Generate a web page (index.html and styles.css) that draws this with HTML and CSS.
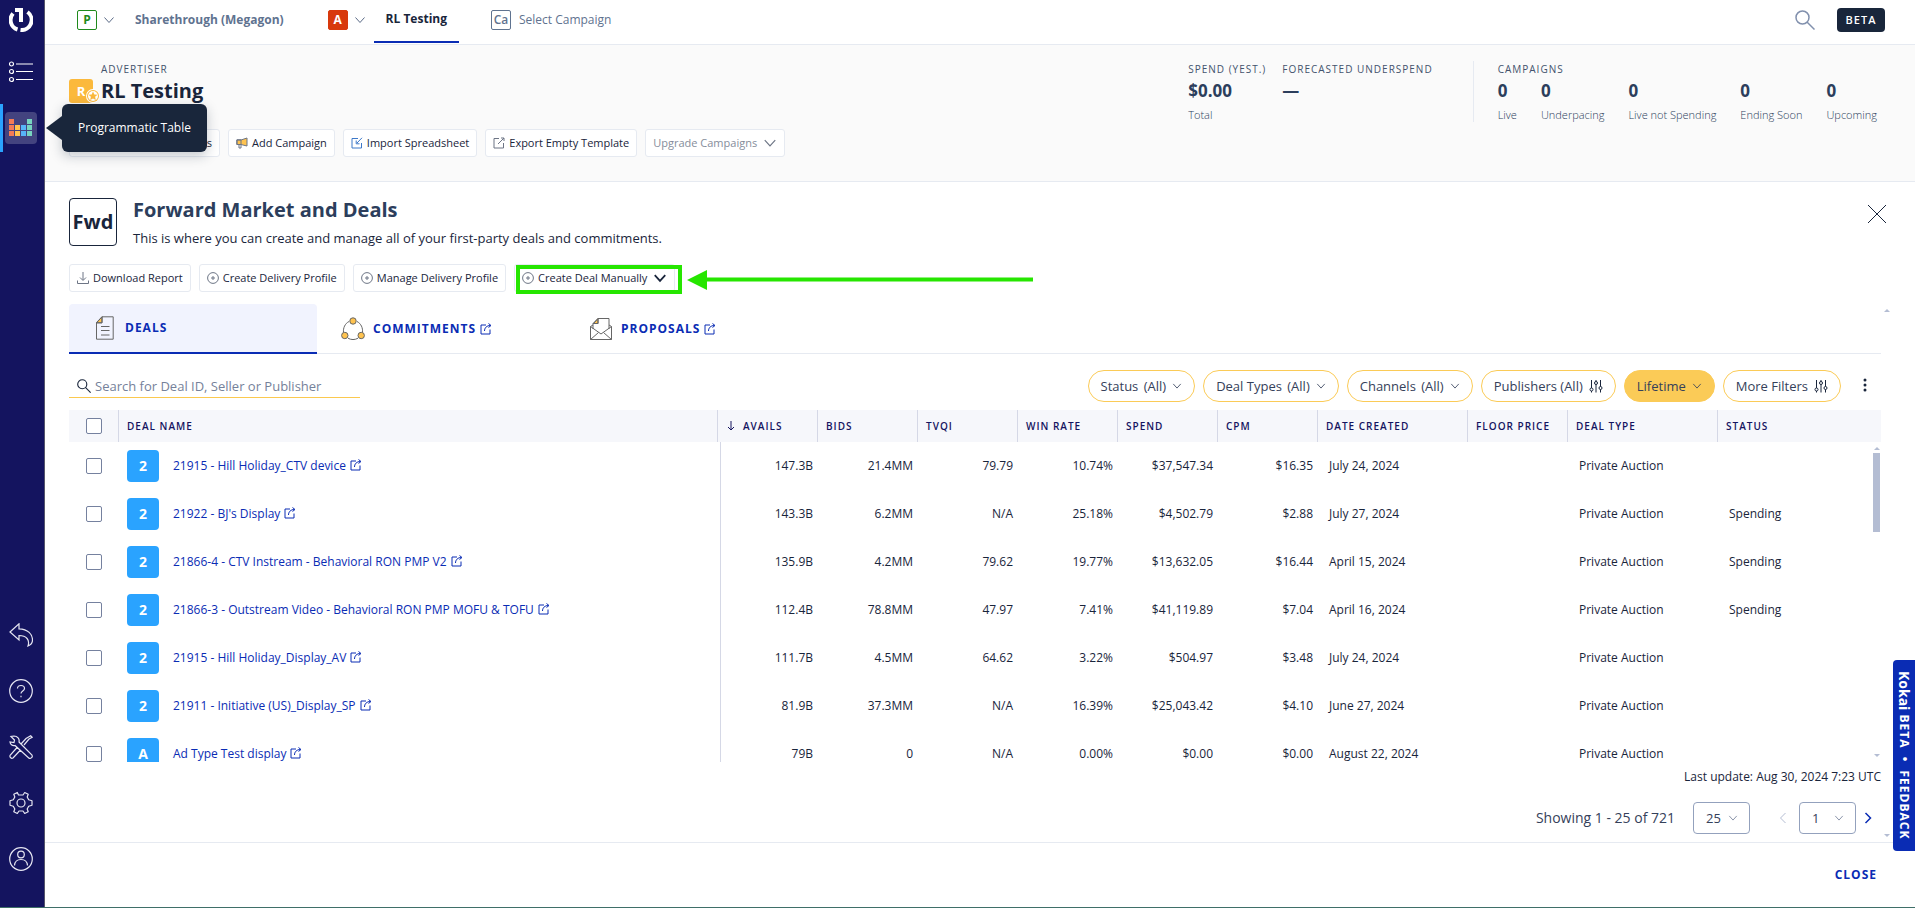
FILE: index.html
```html
<!DOCTYPE html>
<html lang="en">
<head>
    <meta charset="UTF-8">
    <meta name="viewport" content="width=device-width, initial-scale=1.0">
    <title>Forward Market and Deals</title>
    <link rel="stylesheet" href="styles.css">
</head>
<body>
    <!-- Shared icons -->
    <svg class="sprite" aria-hidden="true">
        <symbol id="chevron" viewBox="0 0 12 12"><path d="M1.500 3.500 6 8.500l4.500-5"/></symbol>
        <symbol id="plus" viewBox="0 0 12 12"><circle cx="6" cy="6" r="5.400"/><path d="M6 4v4M4 6h4"/></symbol>
        <symbol id="external" viewBox="0 0 12 12"><path d="M6 2H1v9h9V6.500M4.500 8c0-3 2-5.500 6-5.500M8.500.5l2.500 2-2.500 2"/></symbol>
        <symbol id="sliders" viewBox="0 0 14 14"><path d="M2.500 1v8M2.500 12v1.500M7 1v1.500M7 5.500v8M11.500 1v6.500M11.500 10.500v3"/><circle cx="2.500" cy="10.500" r="1.500"/><circle cx="7" cy="4" r="1.500"/><circle cx="11.500" cy="9" r="1.500"/></symbol>
        <symbol id="search" viewBox="0 0 20 20"><circle cx="7.500" cy="7.500" r="6.500"/><path d="M12 12l7.500 7.500"/></symbol>
    </svg>

    <nav class="sidebar">
        <a class="nav-item logo" href="#" aria-label="Home">
            <svg width="24" height="24" viewBox="0 0 24 24" fill="none" stroke="#fff" stroke-width="4"><path d="M4 5.500A10 10 0 0 0 8.500 21.500M18.500 4a10 10 0 0 1-7 18"/><path d="M6 2h6v12"/></svg>
        </a>
        <a class="nav-item" href="#" aria-label="Campaign list">
            <svg width="24" height="22" viewBox="0 0 24 22" fill="none" stroke="#fff"><circle cx="2.500" cy="3" r="2" stroke-width="1.200"/><circle cx="2.500" cy="10.500" r="2" stroke-width="1.200"/><circle cx="2.500" cy="18.500" r="2" stroke-width="1.200"/><path d="M7 3h17M7 10.500h17M7 18.500h17"/></svg>
        </a>
        <a class="nav-item active" href="#" aria-label="Programmatic Table">
            <span class="tile">
                <svg width="24" height="18" viewBox="0 0 24 18">
                    <path fill="#f37c55" d="M0 0h5v5H0zM0 6h5v5H0zM0 12h5v5H0z"/>
                    <path fill="#ffc34f" d="M6 6h5v5H6zM6 12h5v5H6z"/>
                    <path fill="#57b4f8" d="M12 6h5v5h-5zM12 12h5v5h-5z"/>
                    <path fill="#77d4c0" d="M18 0h5v5h-5zM18 6h5v5h-5zM18 12h5v5h-5z"/>
                </svg>
            </span>
        </a>
        <div class="nav-bottom">
            <a class="nav-item" href="#" aria-label="Back">
                <svg width="24" height="24" viewBox="0 0 24 24" class="line"><path d="M1 9 10 .8v5c9 .2 13.500 5.500 13.500 11.200 0 2.800-1.500 4.800-4.500 6 2-6-1.500-10.500-9-10.500V17z"/></svg>
            </a>
            <a class="nav-item" href="#" aria-label="Help">
                <svg width="24" height="24" viewBox="0 0 24 24" class="line"><circle cx="12" cy="12" r="11.300"/><path d="M8.500 9.500C8.500 7.500 10 6.500 12 6.500s3.500 1 3.500 3c0 2.500-3.500 2.500-3.500 5M12 16.800v1.400"/></svg>
            </a>
            <a class="nav-item" href="#" aria-label="Tools">
                <svg width="24" height="24" viewBox="0 0 24 24" class="line"><path d="M2 1.500 5.500 5 5 7.500l-4-.5c.2 2 2 4 5 3.500L20 23.200c2 .8 4-1.200 3-3L10 7c.8-3-1.500-6-5-6zM15 10l5-6 3.200-1.800-1.500-1.400L17 3.500l-5 5.500M8.500 12 1.300 20c-1.200 2 1 4 2.700 3l7.500-8M21.500 21.800h.01"/></svg>
            </a>
            <a class="nav-item" href="#" aria-label="Settings">
                <svg width="24" height="24" viewBox="0 0 24 24" class="line"><circle cx="12" cy="12" r="4"/><path d="M9.500 4 8.300 1.500 4.800 3.300 5.800 6 4.300 8.800 1 9.800v4.400l3.300 1 1.500 2.800-1 2.700 3.500 1.800L10 20h4l1.700 2.500 3.500-1.800-1-2.700 1.500-2.800 3.300-1V9.800l-3.300-1L18.200 6l1-2.700-3.500-1.800L14 4z" stroke-linejoin="round"/></svg>
            </a>
            <a class="nav-item" href="#" aria-label="Account">
                <svg width="24" height="24" viewBox="0 0 24 24" class="line"><circle cx="12" cy="12" r="11.300"/><circle cx="12" cy="7.500" r="3.300"/><path d="M5.500 18.500c.3-4 2.500-6 6.500-6s6.200 2 6.500 6"/></svg>
            </a>
        </div>
        <div class="tooltip" role="tooltip">Programmatic Table</div>
    </nav>

    <main class="page">
        <header class="topbar">
            <button class="crumb-toggle"><span class="badge green">P</span><svg class="icon"><use href="#chevron"/></svg></button>
            <a class="crumb partner" href="#">Sharethrough (Megagon)</a>
            <button class="crumb-toggle"><span class="badge red">A</span><svg class="icon"><use href="#chevron"/></svg></button>
            <a class="crumb current" href="#">RL Testing</a>
            <a class="crumb campaign" href="#"><span class="badge slate">Ca</span>Select Campaign</a>
            <button class="search-toggle" aria-label="Search"><svg width="20" height="20"><use href="#search"/></svg></button>
            <span class="beta">BETA</span>
        </header>

        <section class="advertiser">
            <div class="advertiser-main">
                <div class="advertiser-title">
                    <div class="avatar">R
                        <svg class="star" width="14" height="14" viewBox="0 0 14 14"><circle cx="7" cy="7" r="7" fill="#fff"/><circle cx="7" cy="7" r="6" fill="#fbb93c"/><circle cx="7" cy="7" r="5" fill="#fff"/><path fill="#fbb93c" d="M7 2.500l1.300 2.900 3.200.3-2.400 2.100.7 3.200L7 9.400l-2.800 1.600.7-3.200-2.400-2.100 3.200-.3z"/></svg>
                    </div>
                    <div>
                        <div class="eyebrow">ADVERTISER</div>
                        <h1>RL Testing</h1>
                    </div>
                </div>
                <div class="actions">
                    <button class="btn edit-btn">Edit Properties</button>
                    <button class="btn"><svg class="icon" viewBox="0 0 12 12"><path fill="#ffc34f" d="M1 3h4l6-2v8L5 7.500H1z"/><path d="M.8 2.800H5v4.700H.8zM3 7.500V11h2V7.500"/></svg>Add Campaign</button>
                    <button class="btn"><svg class="icon blue" viewBox="0 0 12 12"><path d="M7 1.500H1v9.500h9.500V6M11 .8 6 6M5.200 3.500v3.300h3.300"/></svg>Import Spreadsheet</button>
                    <button class="btn"><svg class="icon" viewBox="0 0 12 12"><path d="M6 1.500H1v9.500h9.500V6M5 7l6-6M8 1h3v3"/></svg>Export Empty Template</button>
                    <button class="btn muted">Upgrade Campaigns<svg class="icon large"><use href="#chevron"/></svg></button>
                </div>
            </div>
            <div class="stats">
                <div class="stat spend"><span class="eyebrow">SPEND (YEST.)</span><b>$0.00</b><small>Total</small></div>
                <div class="stat forecast"><span class="eyebrow">FORECASTED UNDERSPEND</span><b>—</b></div>
                <div class="campaign-stats">
                    <span class="eyebrow">CAMPAIGNS</span>
                    <div class="counts">
                        <div class="stat"><b>0</b><small>Live</small></div>
                        <div class="stat"><b>0</b><small>Underpacing</small></div>
                        <div class="stat"><b>0</b><small>Live not Spending</small></div>
                        <div class="stat"><b>0</b><small>Ending Soon</small></div>
                        <div class="stat"><b>0</b><small>Upcoming</small></div>
                    </div>
                </div>
            </div>
        </section>

        <section class="market">
            <div class="market-head">
                <div class="fwd">Fwd</div>
                <div class="market-text">
                    <h2>Forward Market and Deals</h2>
                    <p>This is where you can create and manage all of your first-party deals and commitments.</p>
                </div>
                <button class="close-x" aria-label="Close panel"><svg width="20" height="20" viewBox="0 0 20 20"><path d="M1 1l18 18M19 1 1 19"/></svg></button>
            </div>
            <div class="actions">
                <button class="btn"><svg class="icon" viewBox="0 0 12 12"><path d="M6 0v8M3 5.500l3 3 3-3M.5 8.500v3h11v-3"/></svg>Download Report</button>
                <button class="btn"><svg class="icon"><use href="#plus"/></svg>Create Delivery Profile</button>
                <button class="btn"><svg class="icon"><use href="#plus"/></svg>Manage Delivery Profile</button>
                <div class="callout">
                    <button class="btn create-deal"><svg class="icon"><use href="#plus"/></svg>Create Deal Manually<svg class="icon large dark"><use href="#chevron"/></svg></button>
                    <svg class="callout-arrow" width="346" height="20" viewBox="0 0 346 20"><path d="M0 10 20 0v7.500h326v4H20V20z"/></svg>
                </div>
            </div>

            <div class="tabs">
                <a class="tab active" href="#"><svg width="24" height="24" viewBox="0 0 24 24"><path fill="#ffc34f" d="M9 .8v6H3.500z"/><path d="M9 .8h11.200v22.400H3.500V6.500zM9 .8v6H3.500M8 10.500h8.500M8 14.500h8.500M8 19h8.500"/></svg>DEALS</a>
                <a class="tab" href="#"><svg width="24" height="24" viewBox="0 0 24 24"><path d="M8 4.500C4 6.500 2 11 2.500 15.500M16 4.500c4 2 6 6.500 5.500 11M7 21.200c3 1.800 7 1.800 10 0"/><g fill="#ffc34f"><circle cx="12" cy="4" r="3.200"/><circle cx="3.800" cy="18.500" r="3.200"/><circle cx="20.200" cy="18.500" r="3.200"/></g></svg>COMMITMENTS<svg class="icon ext"><use href="#external"/></svg></a>
                <a class="tab" href="#"><svg width="24" height="24" viewBox="0 0 24 24"><path fill="#ffc34f" d="M9 1.500v5H4.500z"/><path d="M4 12V6.500L9 1.500h11V12M9 1.500v5H4M1.500 9.500v13h21v-13L12 17zM1.500 22.500l8-7M22.500 22.500l-8-7M1.500 9.500 4 8M22.500 9.500 20 8"/></svg>PROPOSALS<svg class="icon ext"><use href="#external"/></svg></a>
                <span class="arrow up"></span>
            </div>

            <div class="filters">
                <label class="search-box"><svg width="14" height="14"><use href="#search"/></svg><input type="text" placeholder="Search for Deal ID, Seller or Publisher" aria-label="Search deals"></label>
                <button class="pill"><span>Status <span class="count">(All)</span></span><svg class="icon"><use href="#chevron"/></svg></button>
                <button class="pill"><span>Deal Types <span class="count">(All)</span></span><svg class="icon"><use href="#chevron"/></svg></button>
                <button class="pill"><span>Channels <span class="count">(All)</span></span><svg class="icon"><use href="#chevron"/></svg></button>
                <button class="pill">Publishers (All)<svg class="icon sliders"><use href="#sliders"/></svg></button>
                <button class="pill filled">Lifetime<svg class="icon"><use href="#chevron"/></svg></button>
                <button class="pill">More Filters<svg class="icon sliders"><use href="#sliders"/></svg></button>
                <button class="more" aria-label="More options"><svg width="4" height="14" viewBox="0 0 4 14"><circle cx="2" cy="2" r="1.500"/><circle cx="2" cy="7" r="1.500"/><circle cx="2" cy="12" r="1.500"/></svg></button>
            </div>

            <div class="table-wrap">
                <table class="deals">
                    <thead>
                        <tr>
                            <th class="col-check"><input type="checkbox" aria-label="Select all"></th>
                            <th>DEAL NAME</th>
                            <th class="col-num"><svg class="sort" width="8" height="10" viewBox="0 0 8 10"><path d="M4 0v9M1 6l3 3 3-3"/></svg>AVAILS</th>
                            <th class="col-num">BIDS</th>
                            <th class="col-num">TVQI</th>
                            <th class="col-num">WIN RATE</th>
                            <th class="col-num">SPEND</th>
                            <th class="col-num">CPM</th>
                            <th class="col-text">DATE CREATED</th>
                            <th class="col-num">FLOOR PRICE</th>
                            <th class="col-text">DEAL TYPE</th>
                            <th class="col-status">STATUS</th>
                        </tr>
                    </thead>
                    <tbody>
                        <tr>
                            <td class="check"><input type="checkbox" aria-label="Select deal"></td>
                            <td><div class="deal"><span class="deal-badge">2</span><a href="#">21915 - Hill Holiday_CTV device<svg class="icon ext"><use href="#external"/></svg></a></div></td>
                            <td class="num first">147.3B</td><td class="num">21.4MM</td><td class="num">79.79</td><td class="num">10.74%</td><td class="num">$37,547.34</td><td class="num">$16.35</td>
                            <td>July 24, 2024</td><td></td><td>Private Auction</td><td></td>
                        </tr>
                        <tr>
                            <td class="check"><input type="checkbox" aria-label="Select deal"></td>
                            <td><div class="deal"><span class="deal-badge">2</span><a href="#">21922 - BJ's Display<svg class="icon ext"><use href="#external"/></svg></a></div></td>
                            <td class="num first">143.3B</td><td class="num">6.2MM</td><td class="num">N/A</td><td class="num">25.18%</td><td class="num">$4,502.79</td><td class="num">$2.88</td>
                            <td>July 27, 2024</td><td></td><td>Private Auction</td><td>Spending</td>
                        </tr>
                        <tr>
                            <td class="check"><input type="checkbox" aria-label="Select deal"></td>
                            <td><div class="deal"><span class="deal-badge">2</span><a href="#">21866-4 - CTV Instream - Behavioral RON PMP V2<svg class="icon ext"><use href="#external"/></svg></a></div></td>
                            <td class="num first">135.9B</td><td class="num">4.2MM</td><td class="num">79.62</td><td class="num">19.77%</td><td class="num">$13,632.05</td><td class="num">$16.44</td>
                            <td>April 15, 2024</td><td></td><td>Private Auction</td><td>Spending</td>
                        </tr>
                        <tr>
                            <td class="check"><input type="checkbox" aria-label="Select deal"></td>
                            <td><div class="deal"><span class="deal-badge">2</span><a href="#">21866-3 - Outstream Video - Behavioral RON PMP MOFU &amp; TOFU<svg class="icon ext"><use href="#external"/></svg></a></div></td>
                            <td class="num first">112.4B</td><td class="num">78.8MM</td><td class="num">47.97</td><td class="num">7.41%</td><td class="num">$41,119.89</td><td class="num">$7.04</td>
                            <td>April 16, 2024</td><td></td><td>Private Auction</td><td>Spending</td>
                        </tr>
                        <tr>
                            <td class="check"><input type="checkbox" aria-label="Select deal"></td>
                            <td><div class="deal"><span class="deal-badge">2</span><a href="#">21915 - Hill Holiday_Display_AV<svg class="icon ext"><use href="#external"/></svg></a></div></td>
                            <td class="num first">111.7B</td><td class="num">4.5MM</td><td class="num">64.62</td><td class="num">3.22%</td><td class="num">$504.97</td><td class="num">$3.48</td>
                            <td>July 24, 2024</td><td></td><td>Private Auction</td><td></td>
                        </tr>
                        <tr>
                            <td class="check"><input type="checkbox" aria-label="Select deal"></td>
                            <td><div class="deal"><span class="deal-badge">2</span><a href="#">21911 - Initiative (US)_Display_SP<svg class="icon ext"><use href="#external"/></svg></a></div></td>
                            <td class="num first">81.9B</td><td class="num">37.3MM</td><td class="num">N/A</td><td class="num">16.39%</td><td class="num">$25,043.42</td><td class="num">$4.10</td>
                            <td>June 27, 2024</td><td></td><td>Private Auction</td><td></td>
                        </tr>
                        <tr>
                            <td class="check"><input type="checkbox" aria-label="Select deal"></td>
                            <td><div class="deal"><span class="deal-badge">A</span><a href="#">Ad Type Test display<svg class="icon ext"><use href="#external"/></svg></a></div></td>
                            <td class="num first">79B</td><td class="num">0</td><td class="num">N/A</td><td class="num">0.00%</td><td class="num">$0.00</td><td class="num">$0.00</td>
                            <td>August 22, 2024</td><td></td><td>Private Auction</td><td></td>
                        </tr>
                    </tbody>
                </table>
                <div class="scrollbar"><span class="arrow up"></span><span class="thumb"></span><span class="arrow down"></span></div>
            </div>

            <div class="updated">Last update: Aug 30, 2024 7:23 UTC</div>
            <div class="pager">
                <span>Showing 1 - 25 of 721</span>
                <span class="select size"><select aria-label="Rows per page"><option>25</option></select><svg class="icon"><use href="#chevron"/></svg></span>
                <button class="step prev" aria-label="Previous page"><svg width="8" height="12" viewBox="0 0 8 12"><path d="M6.500 1 1.500 6l5 5"/></svg></button>
                <span class="select number"><select aria-label="Page"><option>1</option></select><svg class="icon"><use href="#chevron"/></svg></span>
                <button class="step next" aria-label="Next page"><svg width="8" height="12" viewBox="0 0 8 12"><path d="M1.500 1l5 5-5 5"/></svg></button>
                <span class="arrow down"></span>
            </div>
        </section>

        <footer class="footer"><button class="close-link">CLOSE</button></footer>
    </main>

    <button class="feedback"><span>Kokai</span> BETA &nbsp;•&nbsp; FEEDBACK</button>
</body>
</html>
```
FILE: styles.css
```css
* {
    box-sizing: border-box;
}

body {
    margin: 0;
    height: 100vh;
    display: flex;
    overflow: hidden;
    font-family: "Open Sans", "Noto Sans", sans-serif;
    font-size: 12px;
    line-height: 16px;
    color: #19253b;
    background: #fff;
    border-bottom: 1px solid #3f6f68;
}

h1, h2, p {
    margin: 0;
}

a {
    color: inherit;
    text-decoration: none;
}

button, input, select {
    font: inherit;
    color: inherit;
}

button {
    padding: 0;
    border: none;
    background: none;
    cursor: pointer;
}

svg {
    fill: none;
    stroke: currentColor;
    flex: none;
}

.sprite {
    position: absolute;
    width: 0;
    height: 0;
}

.icon {
    width: 12px;
    height: 12px;
}

/* Sidebar */
.sidebar {
    position: relative;
    z-index: 2;
    flex: none;
    width: 45px;
    padding-bottom: 20px;
    display: flex;
    flex-direction: column;
    background: #14145f;
    border-right: 1px solid #55556b;
}

.nav-item {
    height: 56px;
    padding-left: 9px;
    display: flex;
    align-items: center;
    color: #fff;
}

.nav-item svg {
    stroke: none;
}

.nav-item svg[stroke] {
    stroke: #fff;
}

.nav-item .line {
    stroke: #e6e6f2;
    stroke-width: 1.2;
}

.logo {
    height: 44px;
    padding-bottom: 4px;
}

.active .tile {
    width: 32px;
    height: 32px;
    display: grid;
    place-items: center;
    border-radius: 4px;
    background: #43437f;
}

.nav-item.active {
    height: 48px;
    margin: 4px 0;
    padding-left: 2px;
    border-left: 3px solid #2aa3ff;
}

.nav-bottom {
    margin-top: auto;
}

.tooltip {
    position: absolute;
    left: 62px;
    top: 104px;
    width: 145px;
    height: 48px;
    line-height: 48px;
    text-align: center;
    color: #fff;
    background: #19263b;
    border-radius: 6px;
    box-shadow: 0 4px 12px rgba(25, 38, 59, .25);
    font-weight: 500;
}

.tooltip::before {
    content: "";
    position: absolute;
    left: -16px;
    top: 12px;
    border: 12px solid transparent;
    border-left: none;
    border-right: 16px solid #19263b;
}

/* Top bar */
.page {
    flex: 1;
    min-width: 0;
    display: flex;
    flex-direction: column;
}

.topbar {
    height: 45px;
    flex: none;
    padding: 0 30px 4px 32px;
    display: flex;
    align-items: center;
    border-bottom: 1px solid #e6eaf1;
}

.crumb-toggle {
    display: flex;
    align-items: center;
    gap: 6px;
    color: #5b6b87;
}

.badge {
    width: 20px;
    height: 20px;
    display: grid;
    place-items: center;
    border: 1px solid;
    border-radius: 2px;
    font-size: 12px;
    line-height: 16px;
    font-weight: 700;
}

.green {
    color: #1f8a1c;
}

.red {
    color: #fff;
    background: #d8390c;
    border-color: #d8390c;
}

.slate {
    color: #5f7390;
    font-weight: 600;
}

.crumb {
    font-weight: 700;
    color: #5f7390;
}

.partner {
    margin: 0 44px 0 20px;
}

.current {
    height: 42px;
    margin: 4px 32px 0 8px;
    padding: 8px 12px 0;
    line-height: 20px;
    color: #19253b;
    border-bottom: 2px solid #0a2cb4;
}

.campaign {
    display: flex;
    align-items: center;
    gap: 8px;
    font-weight: 500;
}

.search-toggle {
    margin-left: auto;
    height: 20px;
    color: #8190ad;
}

.search-toggle svg {
    stroke-width: 1.5;
}

.beta {
    margin-left: 22px;
    width: 48px;
    height: 24px;
    line-height: 24px;
    text-align: center;
    font-size: 11px;
    font-weight: 600;
    letter-spacing: 1px;
    color: #fff;
    background: #19263b;
    border-radius: 4px;
}

/* Advertiser header */
.advertiser {
    flex: none;
    display: flex;
    justify-content: space-between;
    padding: 16px 38px 24px 24px;
    background: #fafafa;
    border-bottom: 1px solid #e6eaf1;
}

.eyebrow {
    font-size: 10px;
    font-weight: 500;
    letter-spacing: 1px;
    color: #43536d;
    white-space: nowrap;
}

.advertiser-title {
    display: flex;
    align-items: flex-end;
    gap: 8px;
    margin-bottom: 24px;
}

h1 {
    font-size: 20px;
    line-height: 28px;
    font-weight: 700;
}

.avatar {
    position: relative;
    width: 24px;
    height: 24px;
    margin-bottom: 2px;
    line-height: 24px;
    text-align: center;
    font-size: 13px;
    font-weight: 700;
    color: #fff;
    background: #fbb93c;
    border-radius: 3px;
}

.star {
    position: absolute;
    left: 17px;
    top: 10px;
    stroke: none;
}

.actions {
    display: flex;
    gap: 8px;
}

.btn {
    height: 28px;
    padding: 0 7px;
    display: flex;
    align-items: center;
    gap: 4px;
    font-size: 11px;
    white-space: nowrap;
    background: #fff;
    border: 1px solid #e6eaf1;
    border-radius: 3px;
}

.btn .icon {
    color: #6d7585;
}

.btn .blue {
    color: #3d78c8;
}

.btn .large {
    width: 14px;
    height: 14px;
    margin-left: 2px;
}

.btn .dark {
    color: #19253b;
    stroke-width: 1.5;
}

.edit-btn {
    width: 151px;
    justify-content: flex-end;
}

.muted {
    color: #858d9b;
}

.stats {
    display: flex;
    align-items: flex-start;
}

.stat {
    display: flex;
    flex-direction: column;
}

.stat b {
    font-size: 17px;
    line-height: 28px;
    font-weight: 700;
    color: #2c3e5c;
}

.stat small {
    font-size: 11px;
    line-height: 20px;
    font-weight: 300;
    color: #2c3e5c;
}

.spend {
    margin-right: 16px;
}

.campaign-stats {
    height: 61px;
    margin-left: 40px;
    padding-left: 24px;
    border-left: 1px solid #e6eaf1;
}

.campaign-stats .eyebrow {
    display: block;
}

.counts {
    display: flex;
    gap: 24px;
}

/* Forward market panel */
.market {
    flex: 1;
    min-height: 0;
    display: flex;
    flex-direction: column;
    padding: 16px 34px 0 24px;
}

.market-head {
    display: flex;
    gap: 16px;
    margin-bottom: 16px;
}

.fwd {
    width: 48px;
    height: 48px;
    line-height: 46px;
    text-align: center;
    font-size: 20px;
    font-weight: 700;
    border: 1px solid #19253b;
    border-radius: 4px;
}

.market-text {
    flex: 1;
}

h2 {
    font-size: 20px;
    line-height: 24px;
    font-weight: 700;
    color: #2c3e5c;
}

.market-text p {
    margin-top: 6px;
    font-size: 13px;
    line-height: 20px;
}

.close-x {
    width: 20px;
    height: 36px;
    margin-right: -6px;
}

.callout {
    position: relative;
}

.callout::after {
    content: "";
    position: absolute;
    inset: 1px -7px -2px 2px;
    border: 4px solid #26e600;
    pointer-events: none;
}

.callout-arrow {
    position: absolute;
    left: calc(100% + 12px);
    top: 6px;
    fill: #26e600;
    stroke: none;
}

.tabs {
    position: relative;
    display: flex;
    margin-top: 12px;
    border-bottom: 1px solid #e6eaf1;
}

.tab {
    width: 248px;
    height: 50px;
    margin-bottom: -1px;
    padding-left: 24px;
    display: flex;
    align-items: center;
    font-weight: 700;
    letter-spacing: 1px;
    color: #0a2cb4;
}

.tab > svg:first-child {
    margin-right: 8px;
    stroke: #666;
}

.tab.active {
    background: #f1f3fe;
    border-bottom: 2px solid #0a2cb4;
    border-radius: 4px 4px 0 0;
}

.ext {
    margin-left: 4px;
}

.arrow {
    border: 3px solid transparent;
}

.arrow.up {
    border-top: none;
    border-bottom-color: #b4bdd3;
}

.arrow.down {
    border-bottom: none;
    border-top-color: #b4bdd3;
}

.tabs .arrow,
.pager .arrow {
    position: absolute;
    right: -9px;
    top: 5px;
}

.filters {
    display: flex;
    gap: 8px;
    margin: 16px 0 8px;
    font-size: 13px;
}

.search-box {
    width: 291px;
    height: 28px;
    margin-right: auto;
    padding: 4px 0 0 8px;
    display: flex;
    align-items: center;
    gap: 4px;
    border-bottom: 1px solid #fbc94f;
}

.search-box svg {
    stroke-width: 1.6;
}

.search-box input {
    flex: 1;
    min-width: 0;
    padding: 0;
    border: none;
    outline: none;
    background: none;
}

.search-box input::placeholder {
    color: #75819a;
}

.pill {
    height: 32px;
    padding: 0 12px;
    display: flex;
    align-items: center;
    gap: 6px;
    color: #35415a;
    border: 1px solid #fbcb57;
    border-radius: 16px;
    white-space: nowrap;
}

.count {
    margin-left: 2px;
}

.pill .icon {
    width: 10px;
    height: 10px;
}

.pill .sliders {
    width: 14px;
    height: 14px;
    color: #19253b;
}

.filled {
    background: #fbcb57;
}

.more {
    width: 32px;
    height: 32px;
}

.more svg {
    fill: #19253b;
    stroke: none;
}

/* Deals table */
.table-wrap {
    position: relative;
    flex: 1;
    min-height: 0;
    overflow: hidden;
}

.deals {
    width: 100%;
    table-layout: fixed;
    border-collapse: separate;
    border-spacing: 0;
}

.deals th {
    height: 32px;
    padding: 0 0 0 8px;
    text-align: left;
    font-size: 10px;
    font-weight: 600;
    letter-spacing: 1px;
    white-space: nowrap;
    color: #14145f;
    background: #f6f7fb;
    border-left: 1px solid #d5d8e6;
}

.deals .col-check {
    width: 49px;
    padding-left: 17px;
    border-left: none;
}

.col-num {
    width: 100px;
}

.col-text {
    width: 150px;
}

.col-status {
    width: 164px;
}

.sort {
    margin: 0 8px 0 1px;
    vertical-align: -1px;
}

.deals td {
    height: 48px;
    padding: 0 0 0 12px;
}

.deals td.check {
    padding-left: 17px;
}

.deals td.num {
    padding: 0 4px 0 0;
    text-align: right;
}

.deals td.first {
    background: linear-gradient(#d5d8e6, #d5d8e6) 3px 0 / 1px 100% no-repeat;
}

input[type="checkbox"] {
    appearance: none;
    display: block;
    width: 16px;
    height: 16px;
    margin: 0;
    background: #fff;
    border: 1px solid #75819f;
    border-radius: 2px;
}

.deal {
    display: flex;
    align-items: center;
    gap: 14px;
    margin-left: -3px;
    color: #0a2cb4;
    white-space: nowrap;
}

.deal .ext {
    vertical-align: -1px;
}

.deal-badge {
    width: 32px;
    height: 32px;
    line-height: 32px;
    text-align: center;
    font-size: 14px;
    font-weight: 700;
    color: #fff;
    background: #2aa3ff;
    border-radius: 4px;
}

.scrollbar {
    position: absolute;
    right: 1px;
    top: 32px;
    bottom: 0;
    width: 7px;
    padding: 5px 0;
    display: flex;
    flex-direction: column;
    align-items: center;
    gap: 3px;
}

.thumb {
    width: 7px;
    height: 79px;
    background: #b4bdd3;
}

.scrollbar .down {
    margin-top: auto;
}

.updated {
    margin-top: 7px;
    text-align: right;
}

.pager {
    position: relative;
    display: flex;
    align-items: center;
    justify-content: flex-end;
    padding: 17px 9px 8px 0;
    font-size: 14px;
    line-height: 20px;
    color: #35415a;
}

.select {
    display: grid;
    align-items: center;
    height: 32px;
    margin-left: 18px;
}

.select > * {
    grid-area: 1 / 1;
}

.select .icon {
    justify-self: end;
    width: 10px;
    height: 10px;
    margin-right: 12px;
    color: #75819a;
    pointer-events: none;
}

.select select {
    width: 57px;
    height: 32px;
    padding-left: 12px;
    appearance: none;
    font-size: 13px;
    background: #fff;
    border: 1px solid #93a1bd;
    border-radius: 4px;
}

.select.number {
    margin-left: 12px;
}

.step {
    height: 20px;
    line-height: 0;
}

.prev {
    margin-left: 29px;
    color: #b4bdd3;
}

.next {
    margin-left: 8px;
    color: #0a2cb4;
    stroke-width: 1.5;
}

.pager .arrow {
    top: auto;
    bottom: 5px;
}

.footer {
    flex: none;
    height: 65px;
    padding-right: 38px;
    display: flex;
    align-items: center;
    justify-content: flex-end;
    border-top: 1px solid #e6eaf1;
}

.close-link {
    font-weight: 700;
    letter-spacing: 1px;
    color: #0a2cb4;
}

.feedback {
    position: fixed;
    z-index: 3;
    right: 0;
    bottom: 57px;
    width: 22px;
    height: 191px;
    writing-mode: vertical-rl;
    white-space: nowrap;
    font-size: 12px;
    font-weight: 700;
    letter-spacing: 1px;
    color: #fff;
    background: #0a2cb4;
    border-radius: 4px 0 0 4px;
}

.feedback span {
    font-size: 14px;
    letter-spacing: 0;
}
```
